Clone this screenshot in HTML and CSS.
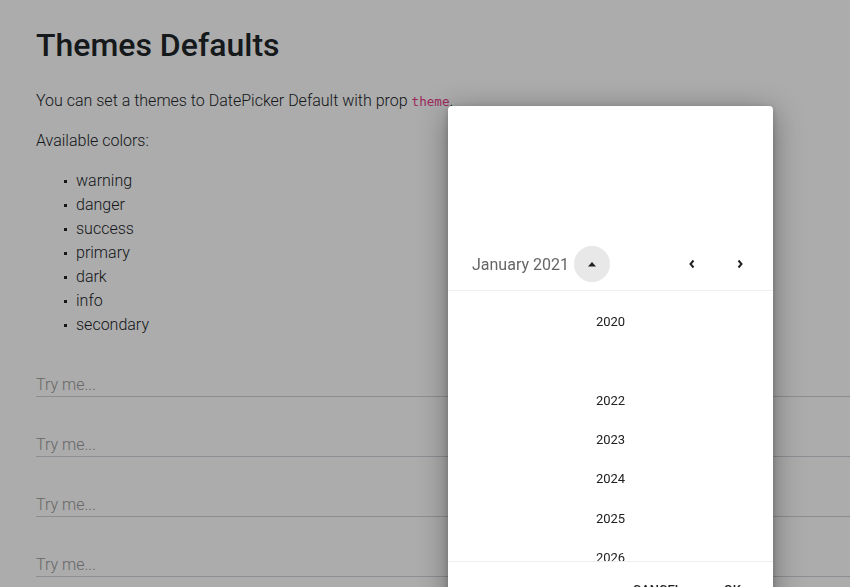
FILE: index.html
```
<!DOCTYPE html>
<html lang="en">

<head>
    <meta charset="UTF-8">
    <meta name="viewport" content="width=device-width, initial-scale=1.0">
    <title>Themes Defaults</title>
    <link rel="stylesheet" href="styles.css">
</head>

<body>
    <main class="page">
        <h1>Themes Defaults</h1>
        <p>You can set a themes to DatePicker Default with prop <code>theme</code>.</p>
        <p>Available colors:</p>
        <ul class="colors">
            <li>warning</li>
            <li>danger</li>
            <li>success</li>
            <li>primary</li>
            <li>dark</li>
            <li>info</li>
            <li>secondary</li>
        </ul>

        <div class="field"><input type="text" placeholder="Try me..."></div>
        <div class="field"><input type="text" placeholder="Try me..."></div>
        <div class="field"><input type="text" placeholder="Try me..."></div>
        <div class="field"><input type="text" placeholder="Try me..."></div>
    </main>

    <div class="backdrop"></div>

    <div class="picker">
        <div class="picker-header"></div>
        <div class="picker-nav">
            <span class="picker-title">January 2021</span>
            <button class="view-toggle">
                <svg width="10" height="6" viewBox="0 0 10 6"><path d="M1 5.5 L5 1 L9 5.5 Z" fill="#212121"/></svg>
            </button>
            <div class="arrows">
                <button class="arrow">
                    <svg width="8" height="10" viewBox="0 0 8 10"><path d="M5.5 1.5 L2.5 5 L5.5 8.5" fill="none" stroke="#212121" stroke-width="2"/></svg>
                </button>
                <button class="arrow">
                    <svg width="8" height="10" viewBox="0 0 8 10"><path d="M2.5 1.5 L5.5 5 L2.5 8.5" fill="none" stroke="#212121" stroke-width="2"/></svg>
                </button>
            </div>
        </div>
        <div class="years">
            <div class="year">2020</div>
            <div class="year selected">2021</div>
            <div class="year">2022</div>
            <div class="year">2023</div>
            <div class="year">2024</div>
            <div class="year">2025</div>
            <div class="year">2026</div>
            <div class="year">2027</div>
        </div>
        <div class="picker-footer">
            <button class="action">Cancel</button>
            <button class="action">Ok</button>
        </div>
    </div>
</body>

</html>
```

FILE: styles.css
```
* {
    margin: 0;
    padding: 0;
    box-sizing: border-box;
}

body {
    font-family: Roboto, "Liberation Sans", sans-serif;
    font-weight: 300;
    font-size: 16px;
    color: #212529;
    background-color: #fff;
    overflow: hidden;
}

.page {
    padding: 26px 0 0 36px;
}

h1 {
    font-size: 32px;
    font-weight: 500;
    line-height: 38px;
    margin-bottom: 25px;
}

p {
    line-height: 24px;
    margin-bottom: 15px;
}

code {
    font-family: "DejaVu Sans Mono", monospace;
    font-size: 12.6px;
    color: #e83e8c;
}

.colors {
    list-style: none;
    padding: 1px 0 0 28px;
    margin-bottom: 16px;
}

.colors li {
    display: flex;
    align-items: center;
    line-height: 24px;
}

.colors li::before {
    content: "";
    width: 3px;
    height: 3px;
    margin-right: 9px;
    background-color: #212529;
}

.field {
    height: 60px;
    padding-top: 19px;
}

.field input {
    display: block;
    width: 100%;
    height: 25px;
    border: none;
    border-bottom: 1px solid #ced4da;
    background: transparent;
    font-family: Roboto, "Liberation Sans", sans-serif;
    font-weight: 300;
    font-size: 16px;
    outline: none;
}

.field input::placeholder {
    color: #9a9a9a;
}

/* dims the page while the picker is open */
.backdrop {
    position: fixed;
    inset: 0;
    background-color: rgba(0, 0, 0, 0.325);
}

.picker {
    position: fixed;
    left: 448px;
    top: 106px;
    width: 325px;
    height: 520px;
    display: flex;
    flex-direction: column;
    background-color: #fff;
    border-radius: 4px;
    box-shadow: 0 6px 30px rgba(0, 0, 0, 0.38), 0 2px 6px rgba(0, 0, 0, 0.2);
}

.picker-header {
    height: 132px;
    flex-shrink: 0;
}

.picker-nav {
    height: 53px;
    flex-shrink: 0;
    display: flex;
    align-items: center;
    padding: 0 13px 0 24px;
    border-bottom: 1px solid #eceeef;
}

.picker-title {
    font-size: 16px;
    font-weight: 400;
    color: #666;
}

.view-toggle {
    width: 36px;
    height: 36px;
    margin-left: 5px;
    border: none;
    border-radius: 50%;
    background-color: #e8e8e8;
    display: flex;
    align-items: center;
    justify-content: center;
}

.arrows {
    margin-left: auto;
    display: flex;
    gap: 8px;
}

.arrow {
    width: 40px;
    height: 40px;
    border: none;
    background: transparent;
    display: flex;
    align-items: center;
    justify-content: center;
}

.years {
    height: 270px;
    flex-shrink: 0;
    overflow: hidden;
    padding-top: 11px;
}

.year {
    height: 39.3px;
    display: flex;
    align-items: center;
    justify-content: center;
    font-size: 13px;
    font-weight: 400;
    color: #212121;
}

.year.selected {
    color: #fff;
}

.picker-footer {
    display: flex;
    justify-content: flex-end;
    gap: 26px;
    padding: 14px 24px 0 0;
    border-top: 1px solid #eceeef;
}

.action {
    border: none;
    background: transparent;
    padding: 6px 8px;
    font-family: Roboto, "Liberation Sans", sans-serif;
    font-size: 13px;
    font-weight: 500;
    text-transform: uppercase;
    color: #212121;
}
```
